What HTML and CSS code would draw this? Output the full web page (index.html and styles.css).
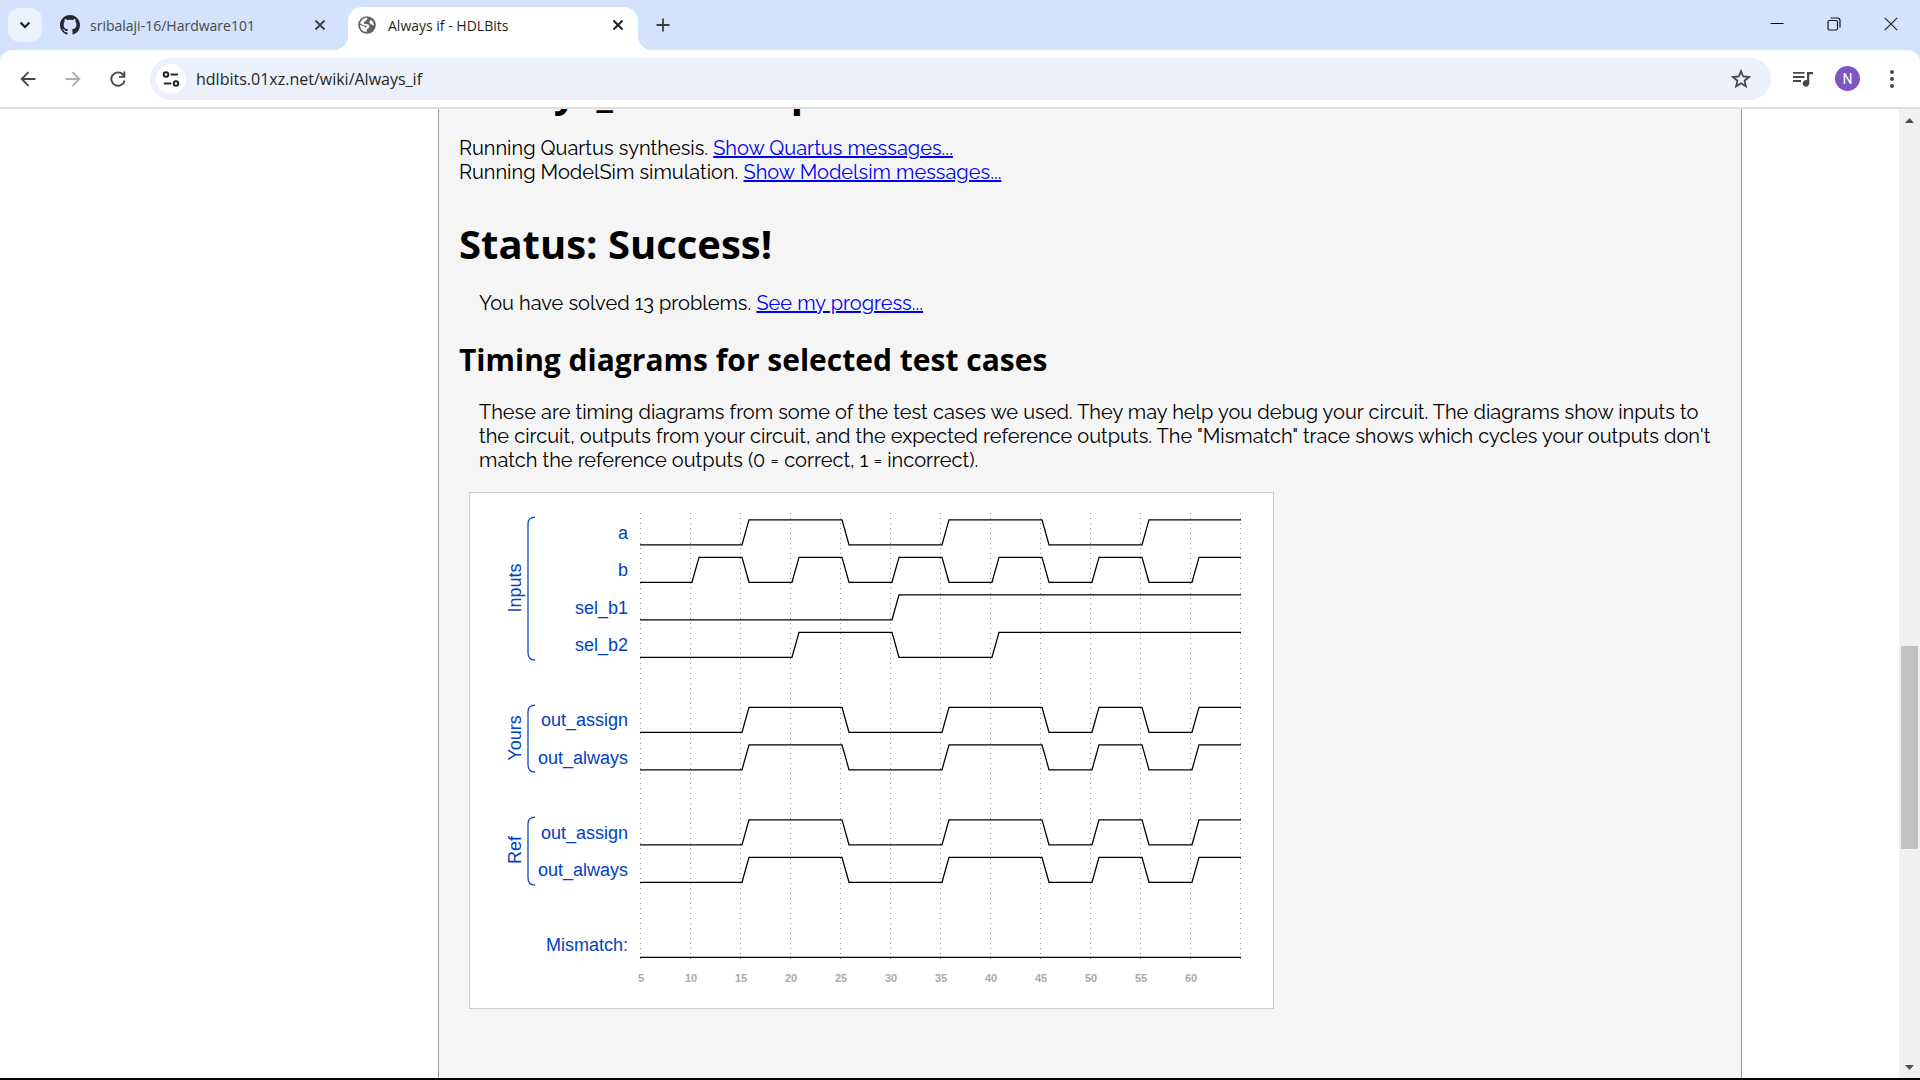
FILE: index.html
```html
<!DOCTYPE html>
<html lang="en">
<head>
<meta charset="utf-8">
<title>Always if - HDLBits</title>
<link rel="stylesheet" href="styles.css">
</head>
<body>
<header class="browser">
  <div class="tabstrip">
    <button class="tab-search" aria-label="Search tabs">
      <svg width="12" height="8" viewBox="0 0 12 8"><path d="M1.5 1.5 6 6l4.500-4.500" fill="none" stroke="#1f1f1f" stroke-width="2.200"/></svg>
    </button>
    <div class="tab">
      <svg class="favicon" viewBox="0 0 16 16"><path fill="#24292f" d="M8 0C3.580 0 0 3.580 0 8c0 3.540 2.290 6.530 5.470 7.590.4.070.55-.17.55-.38 0-.19-.01-.82-.01-1.490-2.010.37-2.530-.49-2.690-.94-.09-.23-.48-.94-.82-1.130-.28-.15-.68-.52-.01-.53.63-.01 1.080.58 1.230.82.72 1.210 1.870.87 2.330.66.070-.52.28-.87.51-1.070-1.780-.2-3.640-.89-3.640-3.950 0-.87.31-1.590.82-2.150-.08-.2-.36-1.020.08-2.120 0 0 .67-.21 2.200.82.64-.18 1.320-.27 2-.27s1.360.09 2 .27c1.530-1.040 2.200-.82 2.200-.82.44 1.100.16 1.920.08 2.120.51.56.82 1.270.82 2.150 0 3.070-1.870 3.750-3.650 3.950.29.25.54.73.54 1.480 0 1.070-.01 1.930-.01 2.200 0 .21.15.46.55.38A8.010 8.010 0 0 0 16 8c0-4.420-3.580-8-8-8z"/></svg>
      <span class="tab-title">sribalaji-16/Hardware101</span>
      <button class="icon-btn tab-close" aria-label="Close tab"><svg width="12" height="12" viewBox="0 0 12 12"><path d="m1.500 1.500 9 9m0-9-9 9" stroke="#3c4043" stroke-width="1.800"/></svg></button>
    </div>
    <div class="tab tab-active">
      <svg class="favicon globe" viewBox="0 0 20 20"><circle cx="10" cy="10" r="9.800" fill="#5f6368"/><path fill="#fff" d="M10.800 2.100 9 5.200 6.600 6.600 7 8.800l3.600.4c1.600.2 2.100 1.200 2.100 2.500l-.7 1.700-2 1.200-.5 3.200C5.400 17.600 2.200 14.300 2.200 10l4.600 1.200 1 1.600 1.800-.4-.3-1.500-3.100-.7L2.400 8.300C3.300 4.600 6.700 1.800 10.800 2.100z"/><path fill="#fff" d="m14.200 4.200 2.900 2.900.6 3.500-2.500-.8-2.500-2.300.3-2.200z"/></svg>
      <span class="tab-title">Always if - HDLBits</span>
      <button class="icon-btn tab-close" aria-label="Close tab"><svg width="12" height="12" viewBox="0 0 12 12"><path d="m1.500 1.500 9 9m0-9-9 9" stroke="#1f1f1f" stroke-width="2"/></svg></button>
    </div>
    <button class="icon-btn new-tab" aria-label="New tab"><svg width="14" height="14" viewBox="0 0 14 14"><path d="M7 .5v13M.5 7h13" stroke="#3c4043" stroke-width="1.800"/></svg></button>
    <div class="window-controls">
      <button class="icon-btn" aria-label="Minimize"><svg width="14" height="14" viewBox="0 0 14 14"><path d="M.5 6.500h13" stroke="#000" stroke-width="1"/></svg></button>
      <button class="icon-btn" aria-label="Restore"><svg width="14" height="14" viewBox="0 0 14 14" fill="none" stroke="#111" stroke-width="1.200"><rect x="1" y="3.500" width="9.500" height="9.500" rx="1.500"/><path d="M3.500 1h7a2.500 2.500 0 0 1 2.500 2.500v7"/></svg></button>
      <button class="icon-btn" aria-label="Close"><svg width="14" height="14" viewBox="0 0 14 14"><path d="m.8.8 12.400 12.400m0-12.400L.8 13.200" stroke="#222" stroke-width="1.200"/></svg></button>
    </div>
  </div>
  <div class="toolbar">
    <nav class="nav-buttons">
      <button class="icon-btn" aria-label="Back"><svg width="16" height="16" viewBox="0 0 16 16"><path d="M15.500 8H2m6.500-6.800L1.700 8l6.800 6.800" fill="none" stroke="#474747" stroke-width="1.900"/></svg></button>
      <button class="icon-btn" aria-label="Forward" disabled><svg width="16" height="16" viewBox="0 0 16 16"><path d="M.5 8H14M7.500 1.200 14.300 8l-6.800 6.800" fill="none" stroke="#adadad" stroke-width="1.900"/></svg></button>
      <button class="icon-btn" aria-label="Reload"><svg width="16" height="16" viewBox="0 0 16 16"><path d="M14.600 9.500A6.700 6.700 0 1 1 13 3.500L14.200 5.500" fill="none" stroke="#474747" stroke-width="1.900"/><path d="M13.400.5h1.900v6.300H9V4.900h4.400z" fill="#474747"/></svg></button>
    </nav>
    <div class="omnibox">
      <button class="site-info" aria-label="View site information"><svg width="18" height="16" viewBox="0 0 18 16" fill="none" stroke="#1f1f1f" stroke-width="1.900"><circle cx="4" cy="3.500" r="2.300"/><path d="M8.500 3.500H16"/><circle cx="14" cy="12.500" r="2.300"/><path d="M1.800 12.500h7.500"/></svg></button>
      <input class="address" type="text" aria-label="Address and search bar" value="hdlbits.01xz.net/wiki/Always_if">
      <button class="icon-btn" aria-label="Bookmark this tab"><svg width="20" height="20" viewBox="0 0 20 20"><path d="m10 2.200 2.200 5.300 5.700.5-4.300 3.700 1.300 5.600-4.900-3-4.900 3 1.300-5.600L2.100 8l5.700-.5z" fill="none" stroke="#474747" stroke-width="1.800"/></svg></button>
    </div>
    <div class="toolbar-actions">
      <button class="icon-btn" aria-label="Media controls"><svg width="20" height="16" viewBox="0 0 20 16"><path d="M0 1.900h11.500M0 6h11.500M0 10h8" stroke="#474747" stroke-width="1.900"/><path d="M14 1h6v2.200h-3.700v9.100a3.300 3.300 0 1 1-2.300-3.100z" fill="#474747"/></svg></button>
      <button class="avatar" aria-label="Profile">N</button>
      <button class="icon-btn" aria-label="Menu"><svg width="4" height="18" viewBox="0 0 4 18" fill="#474747"><circle cx="2" cy="2" r="2"/><circle cx="2" cy="9" r="2"/><circle cx="2" cy="16" r="2"/></svg></button>
    </div>
  </div>
</header>

<div class="viewport">
  <div class="page">
    <main class="content">
      <h1>always_if — Compile and simulate</h1>
      <div class="messages">
        Running Quartus synthesis. <a href="#quartus">Show Quartus messages...</a><br>
        Running ModelSim simulation. <a href="#modelsim">Show Modelsim messages...</a>
      </div>
      <h1 class="status">Status: Success!</h1>
      <p>You have solved 13 problems. <a href="#progress">See my progress...</a></p>
      <h2>Timing diagrams for selected test cases</h2>
      <p>These are timing diagrams from some of the test cases we used. They may help you debug your circuit. The diagrams show inputs to<br>
      the circuit, outputs from your circuit, and the expected reference outputs. The "Mismatch" trace shows which cycles your outputs don't<br>
      match the reference outputs (0 = correct, 1 = incorrect).</p>
      <div class="diagram">
        <svg width="803" height="515" viewBox="0 0 803 515" role="img" aria-label="Timing diagram">
          <path class="grid" d="M170.500 20v447M220.500 20v447M270.500 20v447M320.500 20v447M370.500 20v447M420.500 20v447M470.500 20v447M520.500 20v447M570.500 20v447M620.500 20v447M670.500 20v447M720.500 20v447M770.500 20v447"/>
          <g class="wave">
            <path transform="translate(0 26.750)" d="M170 25H272L279 0H372L379 25H472L479 0H572L579 25H672L679 0H771"/>
            <path transform="translate(0 64.250)" d="M170 25H222L229 0H272L279 25H322L329 0H372L379 25H422L429 0H472L479 25H522L529 0H572L579 25H622L629 0H672L679 25H722L729 0H771"/>
            <path transform="translate(0 101.750)" d="M170 25H422L429 0H771"/>
            <path transform="translate(0 139.250)" d="M170 25H322L329 0H422L429 25H522L529 0H771"/>
            <path transform="translate(0 214.250)" d="M170 25H272L279 0H372L379 25H472L479 0H572L579 25H622L629 0H672L679 25H722L729 0H771"/>
            <path transform="translate(0 251.750)" d="M170 25H272L279 0H372L379 25H472L479 0H572L579 25H622L629 0H672L679 25H722L729 0H771"/>
            <path transform="translate(0 326.750)" d="M170 25H272L279 0H372L379 25H472L479 0H572L579 25H622L629 0H672L679 25H722L729 0H771"/>
            <path transform="translate(0 364.250)" d="M170 25H272L279 0H372L379 25H472L479 0H572L579 25H622L629 0H672L679 25H722L729 0H771"/>
            <path transform="translate(0 439.250)" d="M170 25H771"/>
          </g>
          <g class="label">
            <text x="158" y="46">a</text>
            <text x="158" y="83">b</text>
            <text x="158" y="121">sel_b1</text>
            <text x="158" y="158">sel_b2</text>
            <text x="158" y="233">out_assign</text>
            <text x="158" y="271">out_always</text>
            <text x="158" y="346">out_assign</text>
            <text x="158" y="383">out_always</text>
            <text x="158" y="458">Mismatch:</text>
          </g>
          <g class="group">
            <text transform="translate(51 95) rotate(-90)">Inputs</text>
            <text transform="translate(51 245) rotate(-90)">Yours</text>
            <text transform="translate(51 357) rotate(-90)">Ref</text>
          </g>
          <path class="bracket" d="M65 24q-7 0-7 7v129q0 7 7 7M65 212q-7 0-7 7v53q0 7 7 7M65 324q-7 0-7 7v54q0 7 7 7"/>
          <g class="tick">
            <text x="171" y="489">5</text><text x="221" y="489">10</text><text x="271" y="489">15</text><text x="321" y="489">20</text><text x="371" y="489">25</text><text x="421" y="489">30</text><text x="471" y="489">35</text><text x="521" y="489">40</text><text x="571" y="489">45</text><text x="621" y="489">50</text><text x="671" y="489">55</text><text x="721" y="489">60</text>
          </g>
        </svg>
      </div>
    </main>
  </div>
  <div class="scrollbar" aria-hidden="true">
    <svg width="9" height="5" viewBox="0 0 9 5"><path d="M0 5 4.500 0 9 5z" fill="#505050"/></svg>
    <div class="track"><div class="thumb"></div></div>
    <svg width="9" height="5" viewBox="0 0 9 5"><path d="M0 0 4.500 5 9 0z" fill="#505050"/></svg>
  </div>
</div>
</body>
</html>
```
FILE: styles.css
```css
* { box-sizing: border-box; }

body {
  margin: 0;
  height: 100vh;
  display: flex;
  flex-direction: column;
  overflow: hidden;
  background: #fff;
  color: #000;
}

button {
  border: 0;
  padding: 0;
  background: none;
  font: inherit;
}

.icon-btn {
  flex: none;
  width: 28px;
  height: 28px;
  display: grid;
  place-items: center;
}

svg { display: block; }

/* Browser frame */
.browser {
  flex: none;
  background: #d3e2fd;
  font-family: "Segoe UI", "Open Sans", sans-serif;
}

.tabstrip {
  height: 50px;
  display: flex;
  padding: 7px 8px 0;
}

.tab-search {
  flex: none;
  width: 34px;
  height: 34px;
  margin-top: 1px;
  border-radius: 12px;
  background: #ecf2fe;
  display: grid;
  place-items: center;
}

.tab {
  width: 298px;
  height: 36px;
  margin-left: 8px;
  padding: 0 14px 0 10px;
  display: flex;
  align-items: center;
  color: #474747;
  font-size: 14px;
}

.favicon {
  flex: none;
  width: 20px;
  height: 20px;
  margin-right: 10px;
}

.globe {
  width: 18px;
  height: 18px;
  margin-right: 12px;
}

.tab-title {
  flex: 1;
  white-space: nowrap;
}

.tab-active {
  position: relative;
  width: 290px;
  height: 43px;
  margin-left: 0;
  padding: 0 6px 7px 10px;
  border-radius: 14px 14px 0 0;
  background: #fff;
  color: #1f1f1f;
}

.tab-active::before,
.tab-active::after {
  content: "";
  position: absolute;
  bottom: 0;
  width: 14px;
  height: 14px;
}

.tab-active::before {
  right: 100%;
  background: radial-gradient(circle at 0 0, transparent 14px, #fff 14px);
}

.tab-active::after {
  left: 100%;
  background: radial-gradient(circle at 100% 0, transparent 14px, #fff 14px);
}

.new-tab { margin: 4px 0 0 11px; }

.window-controls {
  display: flex;
  gap: 29px;
  margin: 3px 7px 0 auto;
}

.toolbar {
  height: 59px;
  display: flex;
  align-items: center;
  padding: 0 14px;
  border-bottom: 2px solid #dfdfdf;
  border-radius: 12px 12px 0 0;
  background: #fff;
}

.nav-buttons {
  display: flex;
  gap: 17px;
}

.omnibox {
  flex: 1;
  height: 42px;
  margin-left: 18px;
  padding: 0 16px 0 6px;
  display: flex;
  align-items: center;
  border-radius: 21px;
  background: #ebf0fa;
}

.site-info {
  flex: none;
  width: 30px;
  height: 30px;
  border-radius: 50%;
  background: #fff;
  display: grid;
  place-items: center;
}

.address {
  flex: 1;
  height: 30px;
  margin-left: 10px;
  padding: 0;
  border: 0;
  outline: 0;
  background: none;
  color: #262626;
  font: inherit;
  font-size: 16px;
}

.toolbar-actions {
  display: flex;
  align-items: center;
  gap: 18px;
  margin-left: 18px;
}

.avatar {
  width: 25px;
  height: 25px;
  border-radius: 50%;
  background: #7e57c2;
  color: #fff;
  font-family: Roboto, sans-serif;
  font-size: 14px;
}

/* Scrolled page */
.viewport {
  flex: 1;
  min-height: 0;
  display: flex;
  border-bottom: 2px solid #000;
}

.page {
  flex: 1;
  display: flex;
  overflow: hidden;
  padding: 0 157px 0 438px;
}

.content {
  flex: 1;
  margin-top: -44px;
  padding: 0 20px;
  border: solid #999;
  border-width: 0 1px;
  background: #f5f5f5;
  font-family: Raleway, Lato, sans-serif;
  font-size: 20px;
  font-variant-numeric: oldstyle-nums;
  line-height: 24px;
}

h1, h2 {
  font-family: "Open Sans", sans-serif;
  font-weight: 700;
}

h1 {
  margin: 0 0 17px;
  font-size: 40px;
  line-height: 54px;
}

.status { margin: 33px 0 20px; }

h2 {
  margin: 24px 0 19px;
  font-size: 30px;
  line-height: 42px;
}

p {
  margin: 0 0 20px 20px;
  white-space: nowrap;
}

a { color: #00e; }

.diagram {
  width: fit-content;
  margin-left: 10px;
  border: 1px solid #ccc;
  background: #fff;
}

.diagram text { font-family: "Liberation Sans", Arial, sans-serif; }

.grid {
  stroke: #999;
  stroke-width: 1;
  stroke-dasharray: 1 4;
}

.wave {
  fill: none;
  stroke: #000;
  stroke-width: 1.25;
}

.label {
  fill: #0041c4;
  font-size: 18px;
  text-anchor: end;
}

.group {
  fill: #0041c4;
  font-size: 18px;
  text-anchor: middle;
}

.bracket {
  fill: none;
  stroke: #0041c4;
  stroke-width: 1.25;
}

.tick {
  fill: #aaa;
  font-size: 11px;
  font-weight: 700;
  text-anchor: middle;
}

.scrollbar {
  flex: none;
  width: 21px;
  padding: 9px 0 8px;
  display: flex;
  flex-direction: column;
  align-items: center;
  background: #f0f0f0;
}

.track {
  flex: 1;
  align-self: stretch;
  padding: 0 2px;
}

.thumb {
  height: 21.500%;
  margin-top: 523px;
  background: #c1c1c1;
}
```
